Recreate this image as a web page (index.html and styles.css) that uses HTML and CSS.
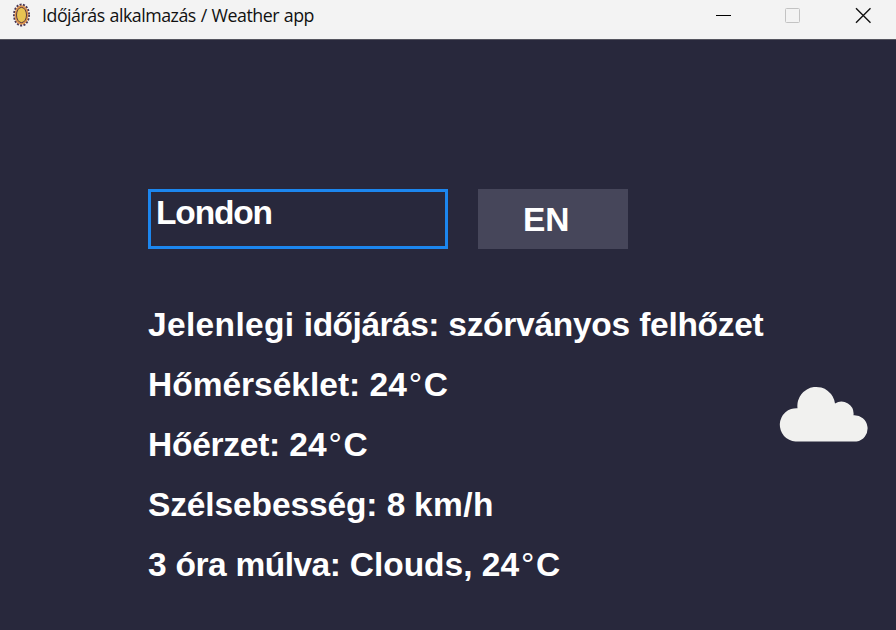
FILE: index.html
```html
<!DOCTYPE html>
<html lang="hu">
<head>
<meta charset="utf-8">
<title>Időjárás alkalmazás / Weather app</title>
<link rel="stylesheet" href="styles.css">
</head>
<body>
<header class="titlebar">
  <svg class="app-icon" width="18" height="24" viewBox="0 0 18 24">
    <ellipse cx="8.500" cy="12" rx="7.300" ry="10.300" fill="none" stroke="#493653" stroke-width="2.400" stroke-dasharray="2 1.300"/>
    <ellipse cx="8.500" cy="12" rx="6.900" ry="9.800" fill="#df9650"/>
    <ellipse cx="8.500" cy="12" rx="5" ry="7.600" fill="#e8c352" stroke="#5a3b42" stroke-width="1"/>
  </svg>
  <h1 class="title">Időjárás alkalmazás / Weather app</h1>
  <svg class="controls" width="145" height="17" viewBox="0 0 145 17" fill="none">
    <path d="M1 8.5H16" stroke="#000"/>
    <rect x="70.5" y="1.5" width="14" height="14" rx="1" stroke="#c3c3c3"/>
    <path d="M141 1.3L155.500 15.800M155.500 1.300L141 15.800" stroke="#111" stroke-width="1.400"/>
  </svg>
</header>
<main class="app">
  <div class="search">
    <div class="city">London</div>
    <div class="lang">EN</div>
  </div>
  <div class="weather">
    <div class="readings">
      <p><span class="loose">Jelenlegi</span> <span class="tight">időjárás:</span> <span class="snug">szórványos</span> <span class="snug">felhőzet</span></p>
      <p>Hőmérséklet: 24<span class="deg">°</span>C</p>
      <p><span class="close">Hőérzet:</span> 24<span class="deg">°</span>C</p>
      <p><span class="even">Szélsebesség:</span> <span class="tight">8</span> <span class="loose">km/h</span></p>
      <p><span class="tight">3</span> <span class="tight">óra</span> <span class="tight">múlva:</span> Clouds, 24<span class="deg">°</span>C</p>
    </div>
    <svg class="cloud" width="90" height="57" viewBox="0 0 90 57">
      <path d="M16.500 55.500A16.600 16.600 0 0 1 18.500 22.200A18.600 18.600 0 1 1 56 17.500A12.200 12.200 0 0 1 74.500 29.300A13.200 13.200 0 0 1 77.500 55.500Z" fill="#f1f1ef"/>
    </svg>
  </div>
</main>
</body>
</html>
```
FILE: styles.css
```css
* { box-sizing: border-box; }
body {
  margin: 0;
  width: 896px;
  height: 630px;
  overflow: hidden;
  background: #28283c;
}
.titlebar {
  display: flex;
  align-items: flex-start;
  height: 40px;
  padding: 3px 0 0 13px;
  background: #f3f3f3;
  border-bottom: 1px solid #55555f;
}
.title {
  margin: 0 0 0 11px;
  font: 400 17.800px/24px "Open Sans", "Noto Sans", sans-serif;
  letter-spacing: -0.480px;
  word-spacing: 0.700px;
  color: #111;
  white-space: nowrap;
}
.controls {
  margin: 4px 36px 0 auto;
  overflow: visible;
}
.app {
  padding: 149px 0 0 148px;
  color: #fff;
  font: 700 33.500px/60px "Liberation Sans", Arial, sans-serif;
}
.search { display: flex; gap: 30px; }
.city {
  width: 300px;
  height: 60px;
  padding-left: 5px;
  border: 3px solid #1c86ee;
  line-height: 41px;
  letter-spacing: -1.150px;
}
.lang {
  width: 150px;
  height: 60px;
  padding-left: 45px;
  background: #46465a;
  line-height: 62px;
}
.weather { display: flex; margin-top: 46px; }
.readings { width: 631px; white-space: nowrap; }
.readings p { margin: 0; height: 60px; }
.cloud { margin: 91px 0 0 -0.500px; }
.deg { margin: 0 1.500px 0 2px; font-weight: 400; }
.loose { letter-spacing: 0.350px; }
.even { letter-spacing: -0.120px; }
.snug { letter-spacing: -0.280px; }
.close { letter-spacing: -0.250px; }
.tight { letter-spacing: -0.500px; }
```
